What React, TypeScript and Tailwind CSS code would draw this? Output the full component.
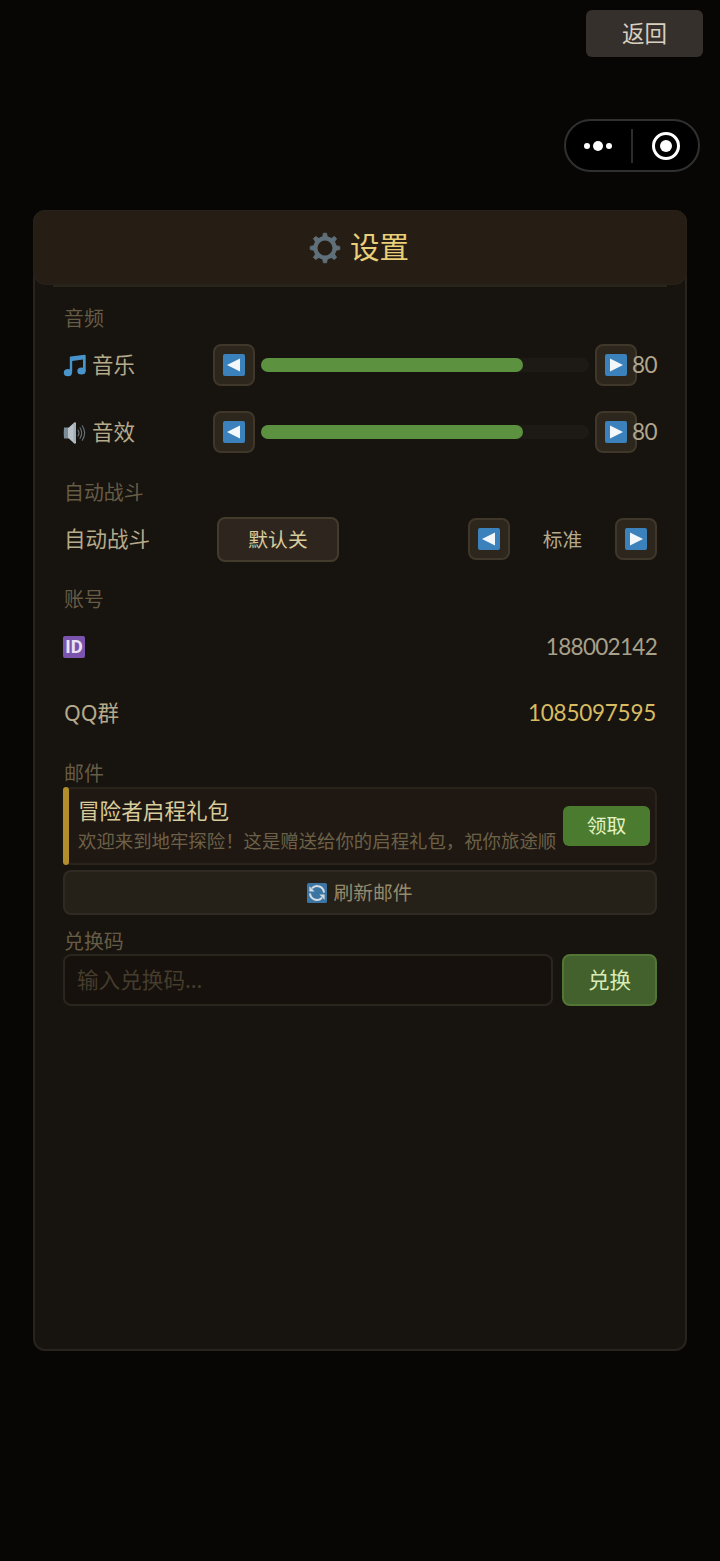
import { useState, type ReactNode } from 'react';
import clsx from 'clsx';

const GearIcon = () => (
  <svg className="h-8 w-8" viewBox="0 0 32 32" fill="none" stroke="#5f707a">
    <circle cx="16" cy="16" r="9.6" strokeWidth="4.2" />
    {[0, 45, 90, 135, 180, 225, 270, 315].map(angle => (
      <path
        key={angle}
        d="M13.6 5.5 L14.4 1.2 H17.6 L18.4 5.5 Z"
        fill="#5f707a"
        strokeWidth="0.8"
        strokeLinejoin="round"
        transform={`rotate(${angle} 16 16)`}
      />
    ))}
  </svg>
);

const MusicIcon = () => (
  <svg className="h-6 w-6" viewBox="0 0 24 24" fill="#4a94cc">
    <path d="M6.8 3.6 Q6.8 2.7 7.7 2.5 L21.6 .8 Q22.7 .7 22.7 1.8 V17 H20 V5.6 L9.2 7 V18.6 H6.8 Z" />
    <ellipse cx="4.9" cy="18.7" rx="4.1" ry="3.6" />
    <ellipse cx="18.5" cy="17" rx="4.2" ry="3.6" />
  </svg>
);

const SpeakerIcon = () => (
  <svg className="h-6 w-6" viewBox="0 0 24 24" fill="none">
    <path d="M1 6.6 H6 V17.4 H1 Q.4 12 1 6.6 Z" fill="#7b8c96" />
    <path d="M5 7.2 L11.3 1.5 Q13 .8 13 2.8 V21.2 Q13 23.2 11.3 22.5 L5 16.8 Z" fill="#b9c2c9" />
    <path d="M10.5 3 Q13 1.6 13 5 V19 Q13 22.4 10.5 21 Z" fill="#a3adb5" />
    <g stroke="#69747b" strokeWidth="1.1" strokeLinecap="round">
      <path d="M15 9 Q17 12 15 15" />
      <path d="M17 6.8 Q20.4 12 17 17.2" />
      <path d="M19.3 4.8 Q24 12 19.3 19.2" />
    </g>
  </svg>
);

const RefreshIcon = () => (
  <svg className="h-5 w-5" viewBox="0 0 20 20" fill="none">
    <rect width="20" height="20" rx="1.6" fill="#3a75a3" />
    <g stroke="#d3dbe0" strokeWidth="2">
      <path d="M5 5.2 A7 7 0 0 1 17 9.6" />
      <path d="M15 14.8 A7 7 0 0 1 3 10.4" />
    </g>
    <path d="M2.4 3.2 V8.4 H7.6 Z" fill="#d3dbe0" />
    <path d="M17.6 16.8 V11.6 H12.4 Z" fill="#d3dbe0" />
  </svg>
);

const ArrowButton = ({ dir, onClick }: { dir: 'left' | 'right'; onClick?: () => void }) => (
  <button
    onClick={onClick}
    className="mb-px flex h-[42px] w-[42px] shrink-0 items-center justify-center rounded-lg border-2 border-[#3f372a] bg-[#2d261c]"
  >
    <svg className="h-[22px] w-[22px]" viewBox="0 0 22 22">
      <rect width="22" height="22" rx="2" fill="#3b82bd" />
      <path d={dir === 'left' ? 'M4 11 L17 4.5 V17.5 Z' : 'M18 11 L5 4.5 V17.5 Z'} fill="#f4f7fa" />
    </svg>
  </button>
);

const SectionTitle = ({ children }: { children: ReactNode }) => (
  <h2 className="h-[27px] pl-px text-[19.9px] leading-[27px] text-[#665c46]">{children}</h2>
);

const Row = ({ children, className }: { children: ReactNode; className?: string }) => (
  <div className={clsx('flex h-[67px] items-center text-[21.5px] text-[#b5aa8c]', className)}>{children}</div>
);

interface VolumeRowProps {
  icon: ReactNode;
  label: string;
  value: number;
  onChange: (value: number) => void;
}

const VolumeRow = ({ icon, label, value, onChange }: VolumeRowProps) => (
  <Row>
    <div className="flex w-[150px] shrink-0 items-center gap-[5px]">
      {icon}
      <span>{label}</span>
    </div>
    <ArrowButton dir="left" onClick={() => onChange(Math.max(0, value - 10))} />
    <div className="mx-1.5 mb-px h-3.5 flex-1 rounded-full bg-[#1d1a16]">
      <div className="h-full rounded-full bg-[#5b913f]" style={{ width: `${value}%` }} />
    </div>
    <ArrowButton dir="right" onClick={() => onChange(Math.min(100, value + 10))} />
    <span className="z-10 -ml-1.5 w-[26px] pb-px text-right font-['Lato'] text-[22.5px] tracking-[-0.5px] text-[#b0a68c]">
      {value}
    </span>
  </Row>
);

export default function App() {
  const [music, setMusic] = useState(80);
  const [sound, setSound] = useState(80);
  const [code, setCode] = useState('');

  return (
    <div className="flex h-[1561px] w-[720px] flex-col bg-[#070604] pt-2.5 font-['Noto_Sans','Noto_Sans_CJK_SC',sans-serif]">
      <button className="mr-[17px] h-[47px] w-[117px] self-end rounded-md bg-[#35302c] text-[22.5px] text-[#d8cfc0]">
        返回
      </button>

      <div className="mt-[62px] mr-5 flex h-[53px] w-[136px] items-center self-end rounded-full border-2 border-[#303030] bg-black">
        <div className="flex w-[65px] items-center justify-center gap-[3px] pr-0.5">
          <span className="h-1.5 w-1.5 rounded-full bg-white" />
          <span className="h-2.5 w-2.5 rounded-full bg-white" />
          <span className="h-1.5 w-1.5 rounded-full bg-white" />
        </div>
        <span className="h-[34px] w-0.5 bg-[#2c2c2c]" />
        <div className="flex w-[65px] items-center justify-center">
          <span className="flex h-7 w-7 items-center justify-center rounded-full border-3 border-white">
            <span className="h-3 w-3 rounded-full bg-white" />
          </span>
        </div>
      </div>

      <div className="mx-[33px] mt-[38px] h-[1141px] rounded-xl border-2 border-[#28241d] bg-[#17130e]">
        <header className="-mx-0.5 -mt-0.5 flex h-[75px] items-center justify-center gap-2.5 rounded-xl border border-[#282119] bg-[#261e15] pr-0.5">
          <GearIcon />
          <h1 className="-ml-px text-[29.5px] text-[#e9cf7a]">设置</h1>
        </header>
        <div className="mx-[18px] h-0.5 bg-[#28251b]" />

        <main className="px-7 pt-[18px]">
          <section>
            <SectionTitle>音频</SectionTitle>
            <VolumeRow icon={<MusicIcon />} label="音乐" value={music} onChange={setMusic} />
            <VolumeRow icon={<SpeakerIcon />} label="音效" value={sound} onChange={setSound} />
          </section>

          <section className="mt-[13px]">
            <SectionTitle>自动战斗</SectionTitle>
            <Row>
              <span className="w-[154px] pl-px">自动战斗</span>
              <button className="h-[45px] w-[122px] rounded-lg border-2 border-[#433c2c] bg-[#2e261e] text-[19.8px] text-[#d8cc9c]">
                默认关
              </button>
              <div className="ml-auto flex items-center">
                <ArrowButton dir="left" />
                <span className="w-[105px] text-center text-[19.8px]">标准</span>
                <ArrowButton dir="right" />
              </div>
            </Row>
          </section>

          <section className="mt-[13px]">
            <SectionTitle>账号</SectionTitle>
            <Row className="justify-between">
              <span className="flex h-[22px] w-[22px] items-center justify-center rounded-xs bg-[#7b55ad] pt-0.5 font-['Roboto'] text-[18.5px] leading-none font-bold text-[#ebe4f3]">
                ID
              </span>
              <span className="font-['Lato'] text-[22.5px] tracking-[-0.7px] text-[#a8a08a]">188002142</span>
            </Row>
            <Row className="justify-between">
              <span className="pl-px">QQ群</span>
              <span className="pr-px pb-px font-['Lato'] text-[22.5px] tracking-[-0.25px] text-[#d8bc62]">
                1085097595
              </span>
            </Row>
          </section>

          <section className="mt-[13px]">
            <SectionTitle>邮件</SectionTitle>
            <div className="flex h-[78px] items-center rounded-lg border-2 border-[#29231b] bg-[#1f1812] pr-[5px]">
              <span className="-ml-0.5 h-[78px] w-1.5 shrink-0 rounded-full bg-[#b28d2d]" />
              <div className="ml-[9px] flex-1 pb-0.5 whitespace-nowrap">
                <div className="text-[21.6px] leading-[30px] text-[#d8cc9c]">冒险者启程礼包</div>
                <div className="text-[18.4px] leading-[29px] text-[#6c6148]">
                  欢迎来到地牢探险！这是赠送给你的启程礼包，祝你旅途顺
                </div>
              </div>
              <button className="h-10 w-[87px] shrink-0 rounded-md bg-[#4b7b2e] text-[19.8px] text-[#e2f3c5]">领取</button>
            </div>
            <button className="mt-[5px] flex h-[45px] w-full items-center justify-center gap-1.5 rounded-lg border-2 border-[#2f2a22] bg-[#252018] text-[19.8px] text-[#958b6c]">
              <RefreshIcon />
              刷新邮件
            </button>
          </section>

          <section className="mt-[13px]">
            <SectionTitle>兑换码</SectionTitle>
            <div className="-mt-px flex gap-[9px]">
              <input
                value={code}
                onChange={e => setCode(e.target.value)}
                placeholder="输入兑换码..."
                className="h-[52px] min-w-0 flex-1 rounded-lg border-2 border-[#2a261e] bg-[#16110c] px-3 pb-0.5 text-[21.6px] outline-none placeholder:text-[#453c2d]"
              />
              <button className="h-[52px] w-[95px] rounded-lg border-2 border-[#527635] bg-[#43612c] text-[21.6px] text-[#d9ecb6]">
                兑换
              </button>
            </div>
          </section>
        </main>
      </div>
    </div>
  );
}
